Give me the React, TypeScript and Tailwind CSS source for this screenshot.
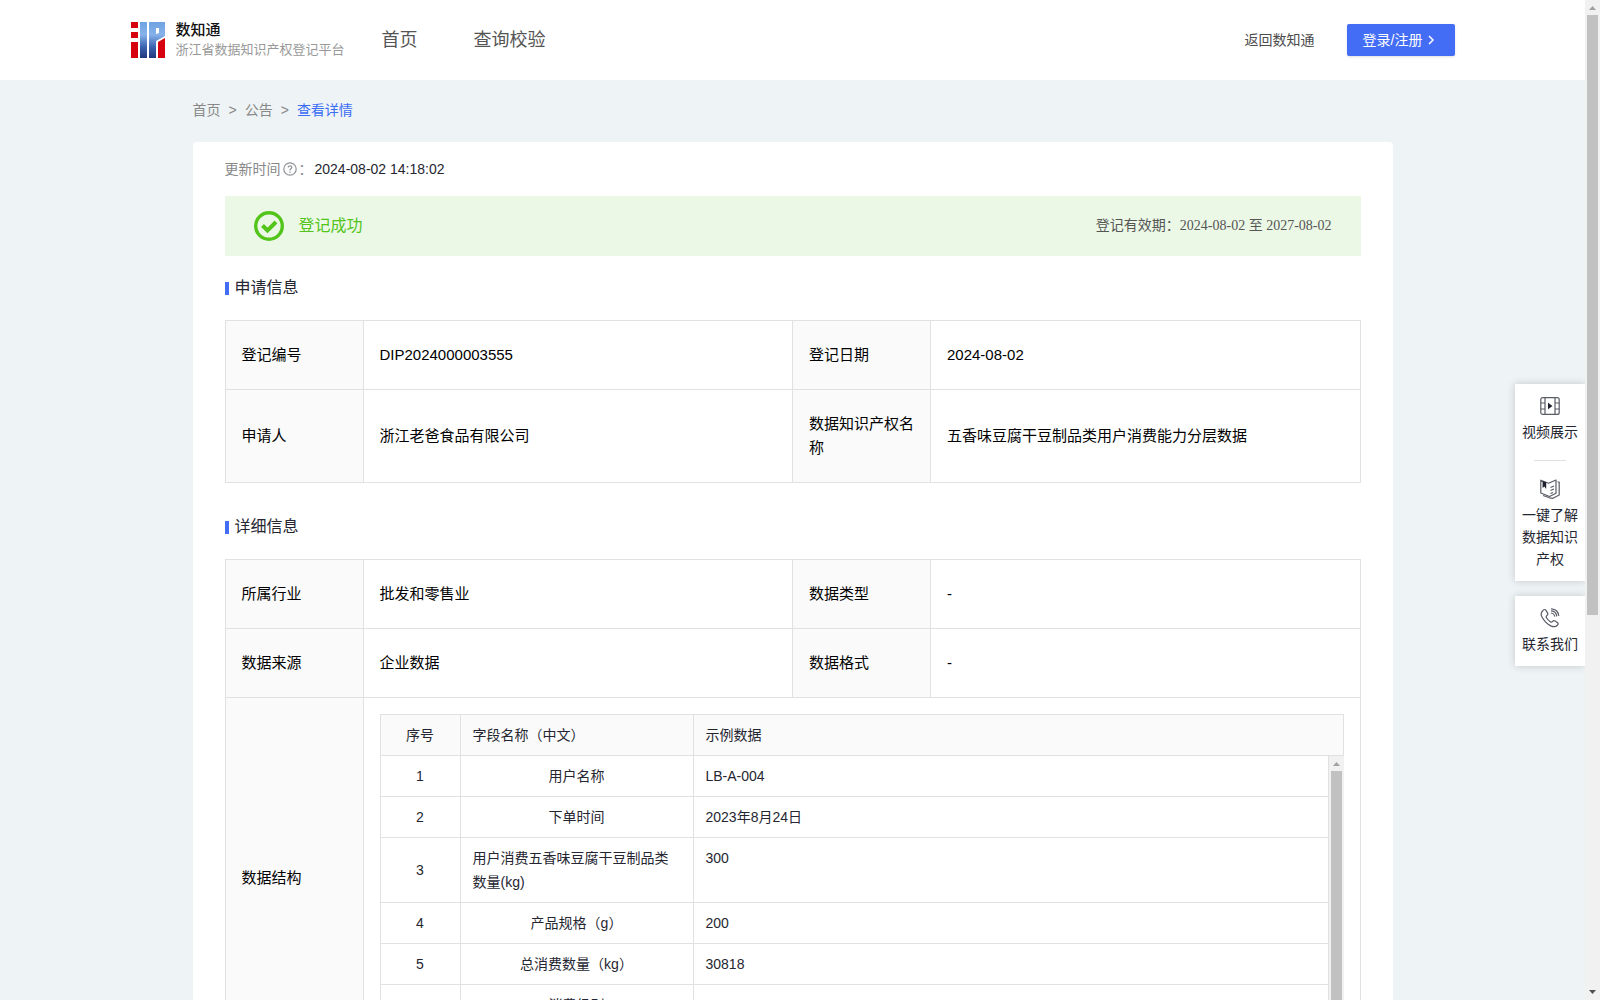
import type { ReactNode } from 'react';

type Pair = { label: string; value: string };

const applyRows: Pair[][] = [
  [
    { label: '登记编号', value: 'DIP2024000003555' },
    { label: '登记日期', value: '2024-08-02' },
  ],
  [
    { label: '申请人', value: '浙江老爸食品有限公司' },
    { label: '数据知识产权名称', value: '五香味豆腐干豆制品类用户消费能力分层数据' },
  ],
];

const detailRows: Pair[][] = [
  [
    { label: '所属行业', value: '批发和零售业' },
    { label: '数据类型', value: '-' },
  ],
  [
    { label: '数据来源', value: '企业数据' },
    { label: '数据格式', value: '-' },
  ],
];

const fields = [
  { name: '用户名称', sample: 'LB-A-004' },
  { name: '下单时间', sample: '2023年8月24日' },
  { name: '用户消费五香味豆腐干豆制品类数量(kg)', sample: '300', long: true },
  { name: '产品规格（g）', sample: '200' },
  { name: '总消费数量（kg）', sample: '30818' },
  { name: '消费级别', sample: '0.272%' },
];

const Logo = () => (
  <svg className="h-9 w-[34px]" viewBox="0 0 34 36" aria-hidden="true">
    <defs>
      <linearGradient id="logo-blue" x1="0" y1="0" x2="0" y2="1">
        <stop offset="0" stopColor="#6fa3e2" />
        <stop offset="0.35" stopColor="#86b2ea" />
        <stop offset="0.7" stopColor="#3a62b0" />
        <stop offset="1" stopColor="#22387c" />
      </linearGradient>
    </defs>
    <path fill="#d7000f" d="M0 0h7v6H0zM0 10h7v6H0zM0 20h7v16H0zM27 20l7-4v20h-7z" />
    <path
      fill="url(#logo-blue)"
      fillRule="evenodd"
      d="M9 0h7v36H9zM18 0h16v14l-9 5v17h-7zM25 6v6l3-1V6z"
    />
  </svg>
);

const VideoIcon = () => (
  <svg className="size-5" viewBox="0 0 20 20" fill="none" stroke="#5a5c66" strokeWidth="1.2" aria-hidden="true">
    <rect x="0.8" y="1.6" width="18.4" height="16.8" rx="2" />
    <path d="M5 1.6v16.8M15 1.6v16.8M.8 7H5M.8 13H5M15 7h4.200M15 13h4.200" />
    <path d="M8 6.800v6.400L12.500 10z" fill="#1f222d" stroke="none" />
  </svg>
);

const BookIcon = () => (
  <svg className="size-5" viewBox="0 0 20 20" fill="none" stroke="#5a5c66" strokeWidth="1.2" strokeLinejoin="round" aria-hidden="true">
    <path d="M.8 1.200 8.500 4.200 16 1v13.200L9.500 17.500.8 14z" />
    <path d="M17.500 3h1.700v13L13 19.300l-3.500-.5L3 16.500" />
    <path d="M2.600 2v7l1.700-1.600L6.200 10V3.200z" fill="#1f222d" stroke="none" />
    <path d="m10.500 8.500 3.500-1.500M10.500 11.500l3.500-1.500M10.500 14.500l2.500-1" />
  </svg>
);

const PhoneIcon = () => (
  <svg className="size-5" viewBox="0 0 20 20" fill="none" stroke="#5a5c66" strokeWidth="1.2" strokeLinejoin="round" strokeLinecap="round" aria-hidden="true">
    <path d="M3.200 2.200C4.200 1.200 5.300 1.300 6 2.400l1.500 2.500c.6 1 .4 1.900-.5 2.500-1 .7-1.100 1.300-.5 2.300a13 13 0 0 0 3.800 4c1 .7 1.600.5 2.300-.4.600-.8 1.500-1 2.500-.4l2.300 1.500c1 .7 1.100 1.700.2 2.600-1.700 1.900-4.100 2.200-6.800.9A21 21 0 0 1 2 9C.4 6.200 1 4.200 3.200 2.200z" />
    <path d="M11.500 5c1.700.3 2.800 1.400 3.200 3.100M11.500 2.900c2.800.3 4.800 2.200 5.200 5M11.500.8c4 .3 6.700 3 7.200 6.700" />
  </svg>
);

const ScrollTrack = ({ children }: { children: ReactNode }) => (
  <div className="flex w-[15px] shrink-0 flex-col items-center bg-[#f1f1f1]" aria-hidden="true">
    <svg className="h-[15px] w-[15px] shrink-0" viewBox="0 0 15 15">
      <path d="M4 10h7L7.500 6z" fill="#a0a0a0" />
    </svg>
    {children}
    <svg className="mt-auto h-[15px] w-[15px] shrink-0" viewBox="0 0 15 15">
      <path d="M4 5h7L7.500 9z" fill="#505050" />
    </svg>
  </div>
);

const SectionTitle = ({ children }: { children: ReactNode }) => (
  <h2 className="flex items-center gap-1.5 text-base leading-6 text-[#252631]">
    <span className="h-[13px] w-1 bg-[#446df6]" />
    {children}
  </h2>
);

const InfoTable = ({ rows, children }: { rows: Pair[][]; children?: ReactNode }) => (
  <table className="w-full table-fixed border-collapse text-left text-[15px] leading-6 text-black">
    <colgroup>
      <col className="w-[138px]" />
      <col />
      <col className="w-[138px]" />
      <col />
    </colgroup>
    <tbody>
      {rows.map((row) => (
        <tr key={row[0].label}>
          {row.map((item) => [
            <th key={item.label} scope="row" className="border border-[#e1e1e1] bg-[#fafafa] px-4 py-[22px] font-normal">
              {item.label}
            </th>,
            <td key={item.label + '-value'} className="border border-[#e1e1e1] px-4 py-[22px]">
              {item.value}
            </td>,
          ])}
        </tr>
      ))}
      {children}
    </tbody>
  </table>
);

const FieldCols = () => (
  <colgroup>
    <col className="w-20" />
    <col className="w-[233px]" />
    <col />
  </colgroup>
);

const FieldTable = () => (
  <div className="border-t border-l border-[#e1e1e1] text-sm leading-6 text-[#252631]">
    <table className="w-full table-fixed border-separate border-spacing-0 bg-[#fafafa] text-left">
      <FieldCols />
      <thead>
        <tr>
          <th className="border-r border-b border-[#e1e1e1] px-3 py-2 text-center font-normal">序号</th>
          <th className="border-r border-b border-[#e1e1e1] px-3 py-2 font-normal">字段名称（中文）</th>
          <th className="border-r border-b border-[#e1e1e1] px-3 py-2 font-normal">示例数据</th>
        </tr>
      </thead>
    </table>
    <div className="flex h-[286px] overflow-hidden">
      <div className="min-w-0 flex-1 overflow-y-auto [scrollbar-width:none]">
        <table className="w-full table-fixed border-separate border-spacing-0">
          <FieldCols />
          <tbody>
            {fields.map((field, index) => (
              <tr key={field.name}>
                <td className="border-r border-b border-[#e1e1e1] px-3 py-2 text-center">{index + 1}</td>
                <td className={`border-r border-b border-[#e1e1e1] px-3 py-2 ${field.long ? 'text-left' : 'text-center'}`}>
                  {field.name}
                </td>
                <td className="border-r border-b border-[#e1e1e1] px-3 py-2 align-top">{field.sample}</td>
              </tr>
            ))}
          </tbody>
        </table>
      </div>
      <ScrollTrack>
        <div className="w-[11px] flex-1 bg-[#c1c1c1]" />
      </ScrollTrack>
    </div>
  </div>
);

const Header = () => (
  <header className="bg-white">
    <div className="mx-auto flex h-20 max-w-[1324px] items-center">
      <a href="#home" className="flex items-center gap-[11px]">
        <Logo />
        <span className="flex flex-col">
          <span className="text-[15px] leading-5 font-medium text-[#111]">数知通</span>
          <span className="text-[13px] leading-5 text-[#999]">浙江省数据知识产权登记平台</span>
        </span>
      </a>
      <nav className="ml-[37px] flex flex-1 gap-14 text-lg leading-7 text-[#555]">
        <a href="#index">首页</a>
        <a href="#verify">查询校验</a>
      </nav>
      <a href="#back" className="mr-8 text-sm text-[#4c4c4c]">
        返回数知通
      </a>
      <button type="button" className="flex h-8 items-center gap-0.5 rounded-xs bg-[#446df6] pr-[18px] pl-4 text-sm text-white shadow-sm">
        登录/注册
        <svg className="size-3" viewBox="0 0 12 12" fill="none" stroke="currentColor" strokeWidth="1.5" aria-hidden="true">
          <path d="m4 2 4 4-4 4" />
        </svg>
      </button>
    </div>
  </header>
);

const SideTools = () => (
  <aside className="absolute top-[384px] right-0 flex w-[70px] flex-col gap-[15px] text-sm leading-[22px] text-[#252631]">
    <div className="flex flex-col items-center bg-white px-[7px] pt-3 pb-[11px] shadow-[0_0_8px_rgba(0,0,0,0.18)]">
      <a href="#video" className="flex flex-col items-center gap-[5px] text-center">
        <VideoIcon />
        视频展示
      </a>
      <span className="mt-[17px] mb-[18px] h-px w-8 bg-[#e1e1e1]" />
      <a href="#guide" className="flex flex-col items-center gap-[5px] text-center">
        <BookIcon />
        一键了解数据知识产权
      </a>
    </div>
    <div className="flex flex-col items-center bg-white px-[7px] pt-3 pb-[11px] shadow-[0_0_8px_rgba(0,0,0,0.18)]">
      <a href="#contact" className="flex flex-col items-center gap-[5px] text-center">
        <PhoneIcon />
        联系我们
      </a>
    </div>
  </aside>
);

export default function App() {
  return (
    <div className="flex h-screen overflow-hidden bg-[#eef3f6] font-['Liberation_Sans','Noto_Sans_CJK_SC',sans-serif]">
      <div className="relative min-w-0 flex-1 overflow-hidden">
        <div className="h-full overflow-y-auto [scrollbar-width:none]">
          <Header />
          <main className="mx-auto max-w-[1200px]">
            <nav className="flex gap-2 pt-5 pb-[22px] text-sm leading-5 text-[#888]">
              <a href="#index">首页</a>
              <span>&gt;</span>
              <a href="#notice">公告</a>
              <span>&gt;</span>
              <a href="#detail" className="text-[#3a6cf6]">
                查看详情
              </a>
            </nav>
            <div className="rounded-t bg-white px-8 pt-4">
              <div className="flex items-center gap-0.5 text-sm leading-[22px] text-[#888]">
                <span>更新时间</span>
                <svg className="size-[14px]" viewBox="0 0 14 14" fill="none" stroke="#909399" strokeWidth="1.2" aria-hidden="true">
                  <circle cx="7" cy="7" r="6.200" />
                  <path d="M5.200 5.600c0-2.300 3.600-2.300 3.600 0C8.800 6.800 7 6.900 7 8.400M7 9.600v1.200" />
                </svg>
                <span>：</span>
                <span className="text-[#252631]">2024-08-02 14:18:02</span>
              </div>
              <div className="mt-4 flex h-[60px] items-center bg-[#ebf8e6] pr-[29px] pl-[29px]">
                <svg className="size-[30px]" viewBox="0 0 30 30" fill="none" stroke="#52c41a" aria-hidden="true">
                  <circle cx="15" cy="15" r="13.300" strokeWidth="3.400" />
                  <path d="m8.500 14.500 5 5 8.500-8.500" strokeWidth="4" />
                </svg>
                <span className="ml-[15px] flex-1 text-base text-[#52c41a]">登记成功</span>
                <span className="font-['Liberation_Serif','Noto_Sans_CJK_SC',serif] text-sm text-[#555]">
                  登记有效期：2024-08-02 至 2027-08-02
                </span>
              </div>
              <section className="mt-5">
                <SectionTitle>申请信息</SectionTitle>
                <div className="mt-5">
                  <InfoTable rows={applyRows} />
                </div>
              </section>
              <section className="mt-8">
                <SectionTitle>详细信息</SectionTitle>
                <div className="mt-5">
                  <InfoTable rows={detailRows}>
                    <tr>
                      <th scope="row" className="border border-[#e1e1e1] bg-[#fafafa] px-4 font-normal">
                        数据结构
                      </th>
                      <td colSpan={3} className="border border-[#e1e1e1] p-4">
                        <FieldTable />
                      </td>
                    </tr>
                  </InfoTable>
                </div>
              </section>
            </div>
          </main>
        </div>
        <SideTools />
      </div>
      <ScrollTrack>
        <div className="h-3/5 w-[11px] bg-[#c1c1c1]" />
      </ScrollTrack>
    </div>
  );
}
